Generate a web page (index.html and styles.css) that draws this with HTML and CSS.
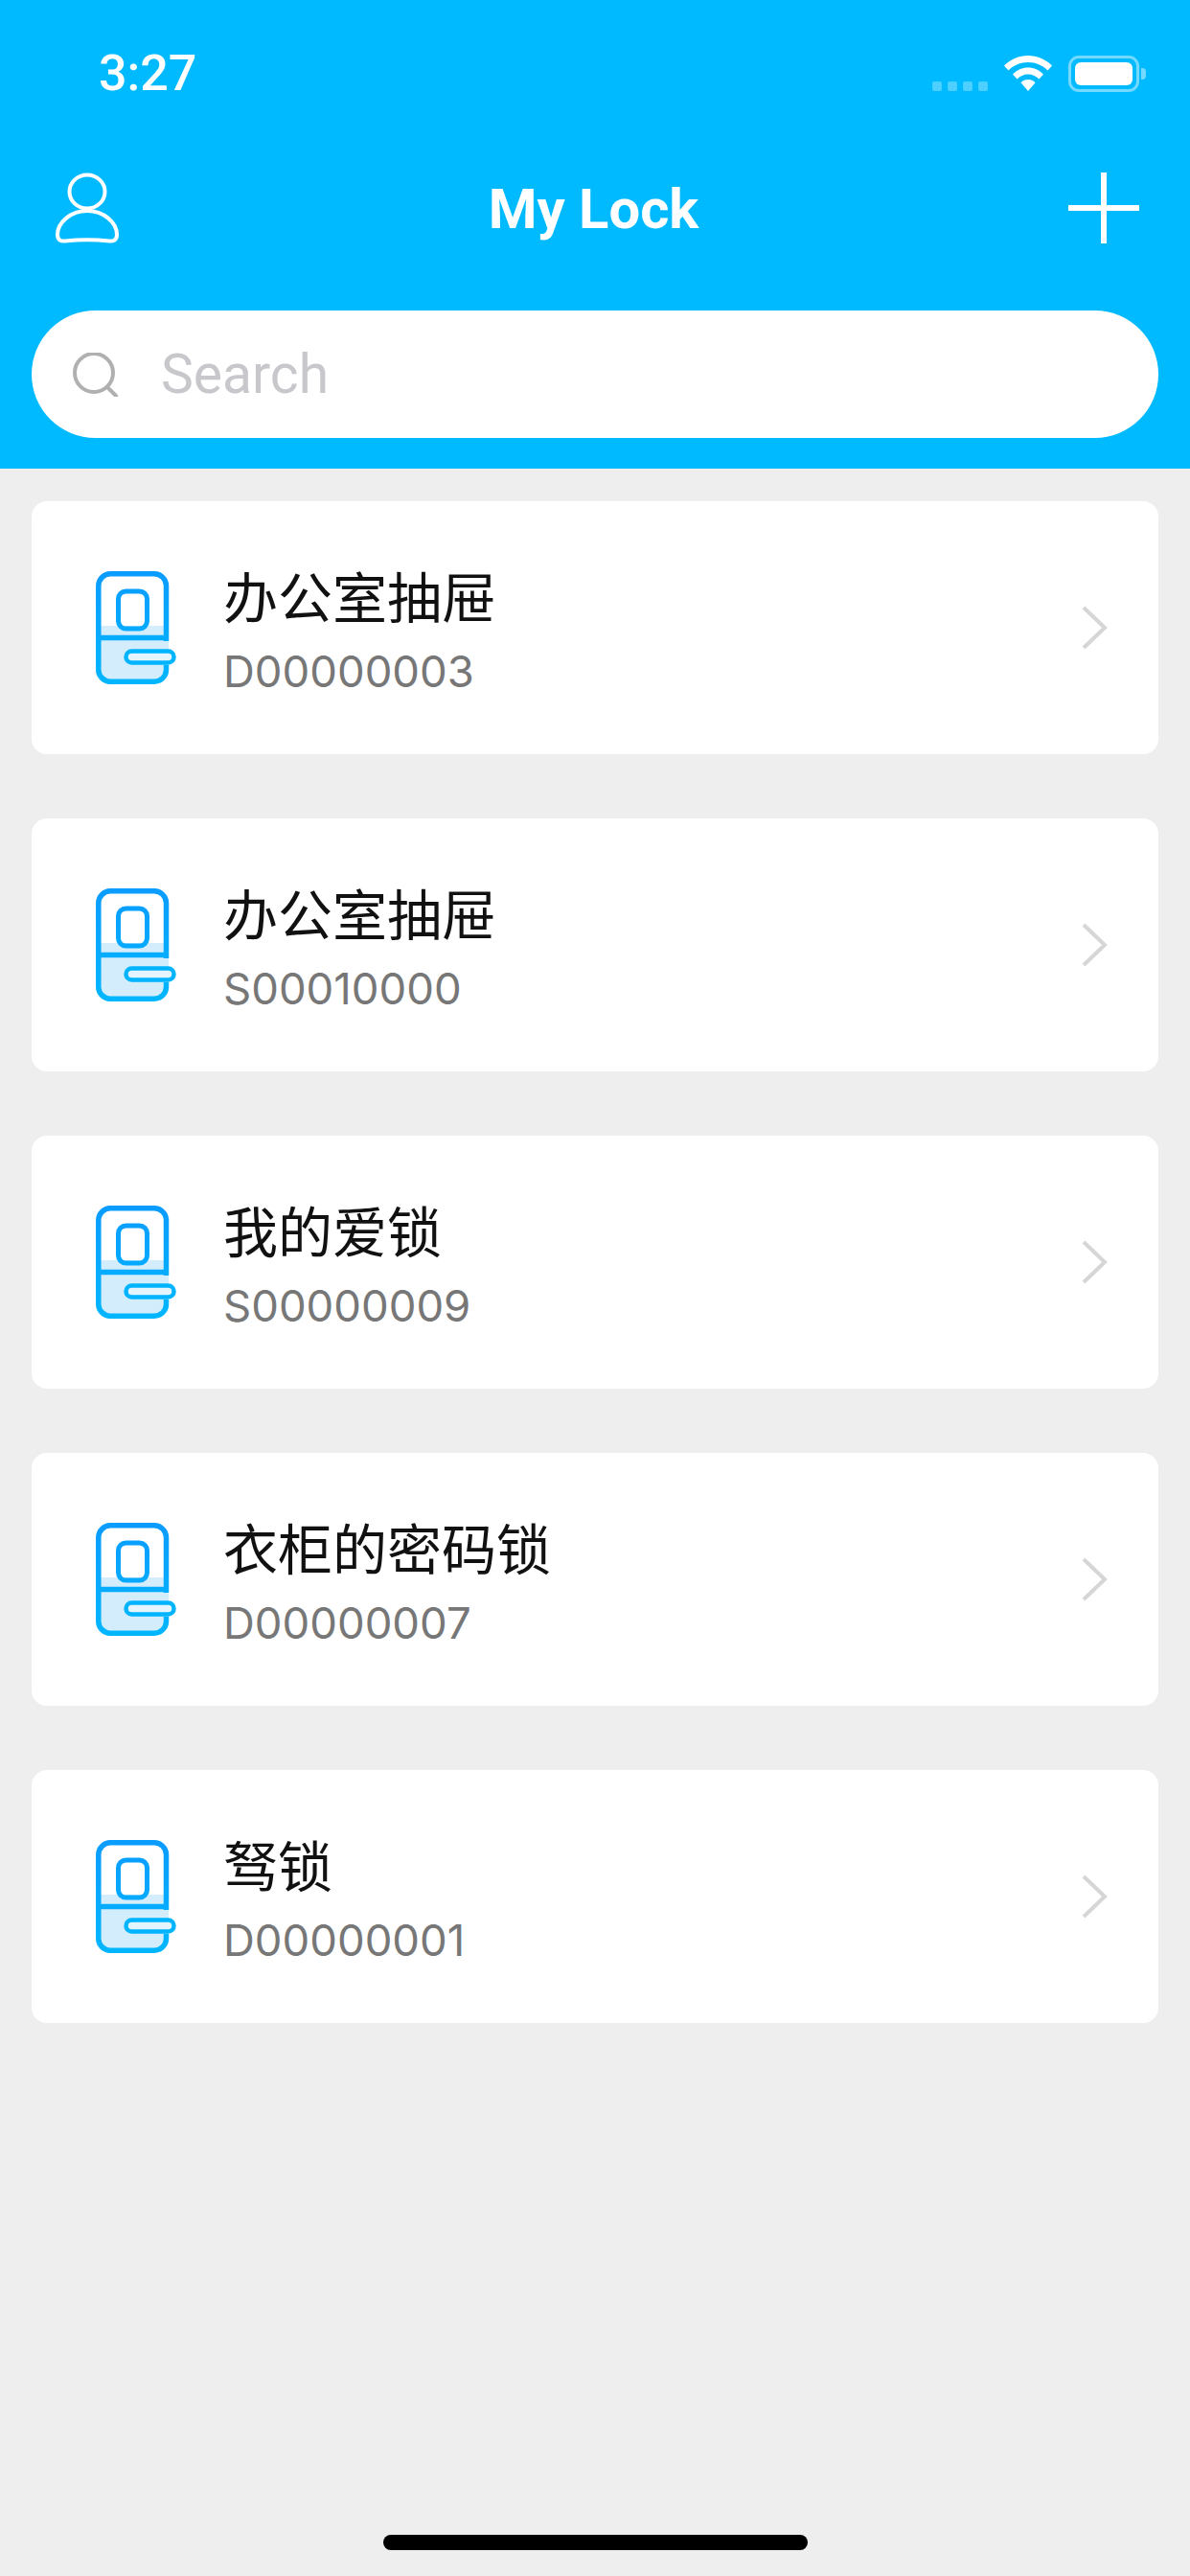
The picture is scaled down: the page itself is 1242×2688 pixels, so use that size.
FILE: index.html
```html
<!DOCTYPE html>
<html lang="zh">
<head>
<meta charset="utf-8">
<title>My Lock</title>
<link rel="stylesheet" href="styles.css">
</head>
<body>
<svg class="defs" width="0" height="0" aria-hidden="true">
  <defs>
    <linearGradient id="doorStroke" gradientUnits="userSpaceOnUse" x1="0" y1="0" x2="0" y2="118">
      <stop offset="0" stop-color="#0a9cff"/>
      <stop offset="1" stop-color="#00b6ff"/>
    </linearGradient>
    <symbol id="door" viewBox="0 0 84 118">
      <path d="M0 57H76V104a13 13 0 0 1-13 13H13A13 13 0 0 1 0 104Z" fill="#d3edfd"/>
      <path d="M73.5 73V15A12.5 12.5 0 0 0 61 2.800H15A12.500 12.500 0 0 0 2.800 15V103A12.500 12.500 0 0 0 15 115.200H61A12.500 12.500 0 0 0 73.500 103V98" fill="none" stroke="url(#doorStroke)" stroke-width="5.500"/>
      <rect x="23.500" y="21" width="30" height="39" rx="8" fill="#fff" fill-opacity="0" stroke="url(#doorStroke)" stroke-width="5"/>
      <path d="M3 69.500H73" fill="none" stroke="url(#doorStroke)" stroke-width="5.500"/>
      <rect x="31.500" y="83.500" width="50" height="12" rx="6" fill="#e4f5ff" stroke="#00b4ff" stroke-width="4.500"/>
    </symbol>
  </defs>
</svg>
<div class="screen">
  <header class="header">
    <div class="status">
      <span class="time">3:27</span>
      <div class="status-icons">
        <div class="signal"><i></i><i></i><i></i><i></i></div>
        <svg class="wifi" width="50" height="37" viewBox="0 0 50 37">
          <path d="M25 0C15.500 0 7 3.600 0 10.500L4.500 15.500C10 10 17 7 25 7S40 10 45.500 15.500L50 10.500C43 3.600 34.500 0 25 0Z" fill="#fff"/>
          <path d="M25 12.500C19 12.500 13.500 15 9 19.500L13.500 24.500C16.500 21.500 20.500 19.500 25 19.500S33.500 21.500 36.500 24.500L41 19.500C36.500 15 31 12.500 25 12.500Z" fill="#fff"/>
          <path d="M25 25C22 25 19.500 26.200 17.500 28.200L25 37L32.500 28.200C30.500 26.200 28 25 25 25Z" fill="#fff"/>
        </svg>
        <div class="battery"><div class="battery-level"></div></div>
      </div>
    </div>
    <nav class="nav">
      <svg class="nav-user" width="66" height="74" viewBox="0 0 66 74">
        <ellipse cx="33" cy="20" rx="18.500" ry="17.500" fill="none" stroke="#fff" stroke-width="4"/>
        <path d="M33 40C16 40 2 52 2 65C2 70 5 72 10 71.500C25 70 41 70 56 71.500C61 72 64 70 64 65C64 52 50 40 33 40Z" fill="none" stroke="#fff" stroke-width="4" stroke-linejoin="round"/>
      </svg>
      <h1 class="nav-title">My Lock</h1>
      <svg class="nav-add" width="74" height="74" viewBox="0 0 74 74">
        <path d="M37 0V74M0 37H74" fill="none" stroke="#fff" stroke-width="6"/>
      </svg>
    </nav>
    <div class="search">
      <svg class="search-icon" width="48" height="46" viewBox="0 0 48 46">
        <circle cx="22" cy="21" r="20" fill="none" stroke="#b0b0b0" stroke-width="4"/>
        <path d="M36 36L45 45" fill="none" stroke="#b0b0b0" stroke-width="4" stroke-linecap="round"/>
      </svg>
      <span class="search-text">Search</span>
    </div>
  </header>
  <main class="list">
    <article class="card">
      <svg class="door" width="84" height="118"><use href="#door"/></svg>
      <div class="info"><div class="name">办公室抽屉</div><div class="code">D00000003</div></div>
      <svg class="chevron" width="28" height="48" viewBox="0 0 28 48"><path d="M3 3L25 24L3 45" fill="none" stroke="#d6d6d6" stroke-width="4"/></svg>
    </article>
    <article class="card">
      <svg class="door" width="84" height="118"><use href="#door"/></svg>
      <div class="info"><div class="name">办公室抽屉</div><div class="code">S00010000</div></div>
      <svg class="chevron" width="28" height="48" viewBox="0 0 28 48"><path d="M3 3L25 24L3 45" fill="none" stroke="#d6d6d6" stroke-width="4"/></svg>
    </article>
    <article class="card">
      <svg class="door" width="84" height="118"><use href="#door"/></svg>
      <div class="info"><div class="name">我的爱锁</div><div class="code">S00000009</div></div>
      <svg class="chevron" width="28" height="48" viewBox="0 0 28 48"><path d="M3 3L25 24L3 45" fill="none" stroke="#d6d6d6" stroke-width="4"/></svg>
    </article>
    <article class="card">
      <svg class="door" width="84" height="118"><use href="#door"/></svg>
      <div class="info"><div class="name">衣柜的密码锁</div><div class="code">D00000007</div></div>
      <svg class="chevron" width="28" height="48" viewBox="0 0 28 48"><path d="M3 3L25 24L3 45" fill="none" stroke="#d6d6d6" stroke-width="4"/></svg>
    </article>
    <article class="card">
      <svg class="door" width="84" height="118"><use href="#door"/></svg>
      <div class="info"><div class="name">驽锁</div><div class="code">D00000001</div></div>
      <svg class="chevron" width="28" height="48" viewBox="0 0 28 48"><path d="M3 3L25 24L3 45" fill="none" stroke="#d6d6d6" stroke-width="4"/></svg>
    </article>
  </main>
  <div class="home-bar"></div>
</div>
</body>
</html>
```
FILE: styles.css
```css
* { box-sizing: border-box; }
html, body { margin: 0; padding: 0; }
body { font-family: Roboto, "Noto Sans CJK SC", sans-serif; background: #eeeeee; }
.defs { display: block; height: 0; }
.screen { width: 1242px; height: 2688px; display: flex; flex-direction: column; background: #eeeeee; overflow: hidden; }

.header { height: 489px; background: #00baff; padding: 0 33px; display: flex; flex-direction: column; flex: none; }
.status { height: 57px; margin-top: 48px; padding: 0 20px 0 70px; display: flex; justify-content: space-between; align-items: center; color: #fff; }
.time { font-size: 52px; font-weight: 500; line-height: 50px; }
.status-icons { display: flex; align-items: center; }
.signal { display: flex; gap: 6px; margin-right: 17px; align-self: flex-end; margin-bottom: 1px; }
.signal i { display: block; width: 10px; height: 10px; border-radius: 2px; background: rgba(255,255,255,.3); }
.wifi { display: block; margin-right: 17px; }
.battery { position: relative; width: 74px; height: 38px; border: 3px solid rgba(255,255,255,.45); border-radius: 11px; padding: 4px; }
.battery::after { content: ""; position: absolute; right: -10px; top: 10px; width: 5px; height: 12px; border-radius: 0 4px 4px 0; background: rgba(255,255,255,.45); }
.battery-level { height: 100%; background: #fff; border-radius: 6px; }

.nav { display: flex; align-items: center; justify-content: space-between; padding: 0 20px 0 25px; margin-top: 75px; height: 74px; }
.nav-user, .nav-add { display: block; flex: none; }
.nav-title { margin: 0; padding-top: 2px; font-size: 58px; font-weight: 700; color: #fff; line-height: 74px; }

.search { margin-top: 70px; height: 133px; border-radius: 67px; background: #fff; display: flex; align-items: center; padding-left: 43px; }
.search-icon { display: block; flex: none; margin-right: 44px; }
.search-text { font-size: 57px; color: #c8c8cc; line-height: 62px; }

.list { padding: 34px 33px 0; display: flex; flex-direction: column; gap: 67px; flex: none; }
.card { height: 264px; background: #fff; border-radius: 16px; display: flex; align-items: center; padding: 0 53px 0 67px; }
.door { display: block; flex: none; margin-right: 49px; }
.info { flex: 1; display: flex; flex-direction: column; padding-top: 3px; }
.name { font-family: "Noto Sans CJK SC", sans-serif; font-weight: 400; font-size: 57px; line-height: 72px; color: #111; }
.code { font-family: Inter, sans-serif; font-size: 45.500px; line-height: 56px; margin-top: 17px; color: #777; }
.chevron { display: block; flex: none; }

.home-bar { width: 443px; height: 16px; border-radius: 8px; background: #000; margin: auto auto 27px; }
```
